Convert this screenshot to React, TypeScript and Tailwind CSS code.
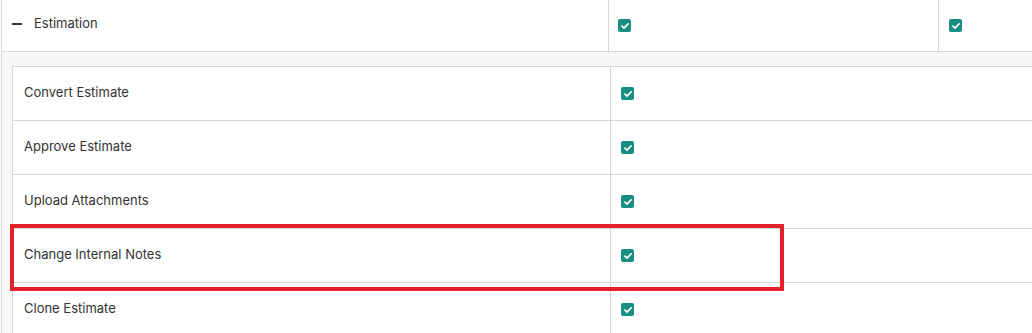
import React from "react";

const subRows = [
  "Convert Estimate",
  "Approve Estimate",
  "Upload Attachments",
  "Change Internal Notes",
  "Clone Estimate",
];

function Check() {
  return (
    <span className="flex h-[13px] w-[13px] items-center justify-center rounded-[2px] bg-[#168f80]">
      <svg viewBox="0 0 12 12" className="h-[10px] w-[10px]" fill="none">
        <path d="M2.3 6.2 4.8 8.6 9.7 3.4" stroke="white" strokeWidth="2" strokeLinecap="round" strokeLinejoin="round" />
      </svg>
    </span>
  );
}

export default function App() {
  return (
    <div
      className="relative h-[333px] w-[1032px] overflow-hidden bg-white text-[13px] text-[#333333]"
      style={{ fontFamily: "Inter, 'Noto Sans', sans-serif" }}
    >
      <div className="ml-px border-l border-[#d6d6d6]">
        <div className="flex h-[52px] border-b border-[#d6d6d6]">
          <div className="flex w-[607px] items-center border-r border-[#d6d6d6] pl-[10px]">
            <div className="-mt-[3px] flex items-center gap-[12px]">
              <span className="h-[2px] w-[10px] bg-[#333333]" />
              <span>Estimation</span>
            </div>
          </div>
          <div className="flex w-[330px] items-center border-r border-[#d6d6d6] pl-[9px]">
            <Check />
          </div>
          <div className="flex flex-1 items-center pl-[10px]">
            <Check />
          </div>
        </div>

        <div className="bg-[#f7f7f7] pl-[10px] pt-[14px]">
          <div className="border-l border-t border-[#d6d6d6] bg-white">
            {subRows.map((label) => (
              <div key={label} className="flex h-[54px] border-b border-[#d6d6d6]">
                <div className="flex w-[598px] items-center border-r border-[#d6d6d6] pl-[11px]">
                  <span className="-mt-px">{label}</span>
                </div>
                <div className="flex flex-1 items-center pl-[10px]">
                  <Check />
                </div>
              </div>
            ))}
          </div>
        </div>
      </div>

      {/* highlight box */}
      <div className="absolute left-[10px] top-[224px] h-[67px] w-[774px] border-4 border-[#e2212b]" />
    </div>
  );
}
